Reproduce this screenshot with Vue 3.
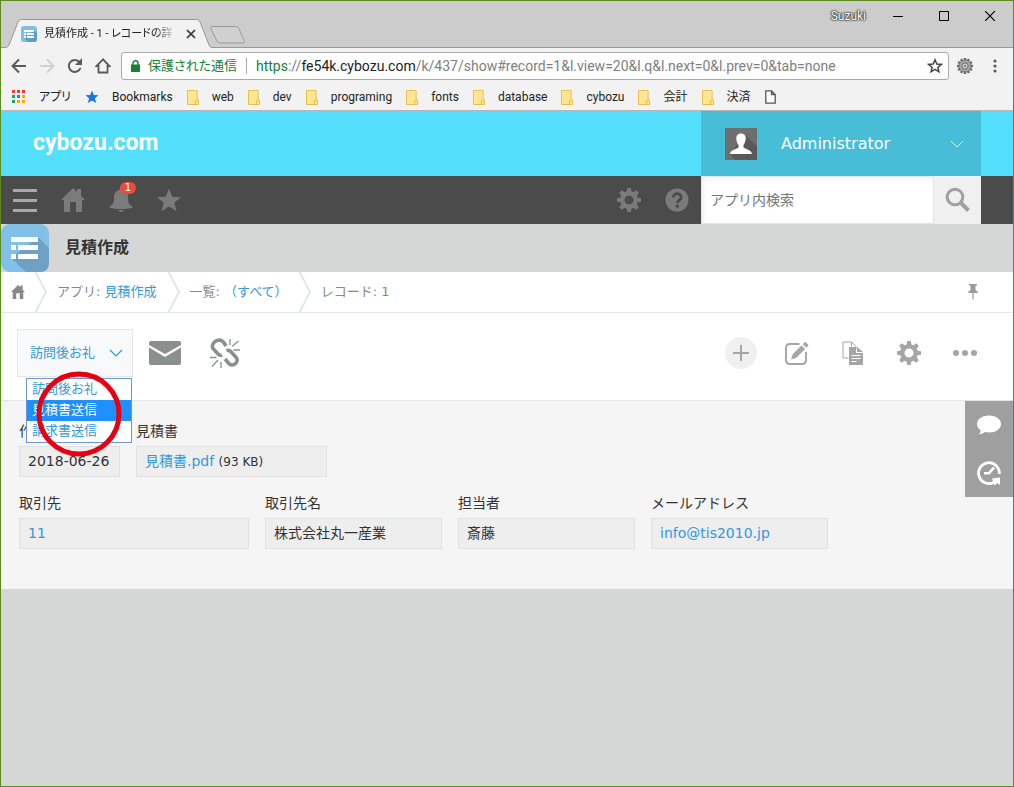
<script setup>
import { ref } from 'vue'

const bookmarks = [
  { label: 'アプリ', icon: 'apps' },
  { label: 'Bookmarks', icon: 'bluestar' },
  { label: 'web', icon: 'folder' },
  { label: 'dev', icon: 'folder' },
  { label: 'programing', icon: 'folder' },
  { label: 'fonts', icon: 'folder' },
  { label: 'database', icon: 'folder' },
  { label: 'cybozu', icon: 'folder' },
  { label: '会計', icon: 'folder' },
  { label: '決済', icon: 'folder' },
  { label: '', icon: 'page' },
]

const statuses = ['訪問後お礼', '見積書送信', '請求書送信']
const status = ref('訪問後お礼')
const highlighted = ref('見積書送信')
const keyword = ref('')
const teeth = [0, 45, 90, 135, 180, 225, 270, 315]
const fineTeeth = [0, 30, 60, 90, 120, 150, 180, 210, 240, 270, 300, 330]
const appColors = ['#f4382c', '#f4382c', '#f4382c', '#1fa463', '#2a7de1', '#f9a800', '#1fa463', '#f9a800', '#f9a800']
</script>

<template>
  <div class="window">
    <svg class="defs" aria-hidden="true">
      <symbol id="gear" viewBox="0 0 24 24">
        <circle cx="12" cy="12" r="6.7" fill="none" stroke="currentColor" stroke-width="4.4" />
        <path v-for="a in teeth" :key="a" d="M9.4 5 10.2 0h3.6l.8 5z" fill="currentColor" :transform="`rotate(${a} 12 12)`" />
      </symbol>
      <symbol id="house" viewBox="0 0 24 24">
        <path d="M12 0 0 12h3v12h6V14h6v10h6V12h3l-4-4V1h-4v3z" fill="currentColor" />
      </symbol>
      <symbol id="apps" viewBox="0 0 14 14">
        <rect v-for="(c, i) in appColors" :key="i" :x="(i % 3) * 5" :y="Math.floor(i / 3) * 5" width="3" height="3" :fill="c" />
      </symbol>
      <symbol id="bluestar" viewBox="0 0 14 14">
        <path d="M7 .5 8.8 5l4.7.3-3.6 3 1.2 4.7L7 10.4 2.9 13l1.2-4.7-3.6-3L5.200 5z" fill="#1a73e8" />
      </symbol>
      <symbol id="folder" viewBox="0 0 12 15">
        <path d="M.5.5h9.600v9.500h1.400v4.500H.5z" fill="#ffe694" stroke="#e6c04b" />
        <path d="M8.500 14v-3.500h1.700" fill="none" stroke="#e6c04b" />
      </symbol>
      <symbol id="page" viewBox="0 0 11 14">
        <path d="M.8.8h5.700l3.700 3.700v8.700H.8zM6.500.8v3.700h3.700" fill="#fff" stroke="#555" stroke-width="1.300" />
      </symbol>
    </svg>

    <header class="browser">
      <div class="tabstrip">
        <div class="tab">
          <svg class="tabshape" viewBox="0 0 206 29" preserveAspectRatio="none" aria-hidden="true">
            <path d="M0 28.500 Q2 28 3 26L12 3Q13 .5 15 .5H191Q193 .5 194 3L203 26Q204 28.500 206 28.500V29H0z" fill="#f2f2f2" />
            <path d="M0 28.500 Q2 28 3 26L12 3Q13 .5 15 .5H191Q193 .5 194 3L203 26Q204 28.500 206 28.500" fill="none" stroke="#999" />
          </svg>
          <svg class="favicon" viewBox="0 0 16 16" aria-hidden="true">
            <rect width="16" height="16" rx="3" fill="#7fbfe6" />
            <path d="M13 4 16 7v6q0 3-3 3H7l-4-4z" fill="#5b9fca" />
            <path d="M3 4h10v2H3zM3 7h2v2H3zM6 7h7v2H6zM3 10h2v2H3zM6 10h7v2H6z" fill="#fff" />
          </svg>
          <span class="tabtitle">見積作成 - 1 - レコードの詳</span>
          <button class="plain tabclose" aria-label="タブを閉じる">
            <svg width="10" height="10" viewBox="0 0 10 10"><path d="M1 1l8 8M9 1 1 9" stroke="#333" stroke-width="1.700" /></svg>
          </button>
        </div>
        <button class="plain newtab" aria-label="新しいタブ">
          <svg width="36" height="18" viewBox="0 0 36 18"><path d="M2 .5h24q2 0 3 2l5 12q1 2.500-1 2.500H10q-2 0-3-2L1 3Q0 .5 2 .5z" fill="#d0d0d0" stroke="#999" /></svg>
        </button>
        <span class="account">Suzuki</span>
        <button class="plain winbtn" aria-label="最小化"><svg width="10" height="10"><path d="M0 5.500h10" stroke="#000" /></svg></button>
        <button class="plain winbtn" aria-label="最大化"><svg width="10" height="10"><path d="M.5.5h9v9h-9z" fill="none" stroke="#000" /></svg></button>
        <button class="plain winbtn" aria-label="閉じる"><svg width="10" height="10"><path d="M0 0l10 10M10 0 0 10" stroke="#000" stroke-width="1.200" /></svg></button>
      </div>

      <div class="addressrow">
        <button class="plain navbtn" aria-label="戻る"><svg width="16" height="16" viewBox="0 0 16 16"><path d="M15 8H2M8 1.500 1.500 8 8 14.500" fill="none" stroke="#5a5a5a" stroke-width="2" /></svg></button>
        <button class="plain navbtn" aria-label="進む"><svg width="16" height="16" viewBox="0 0 16 16"><path d="M1 8h13M8 1.500 14.500 8 8 14.500" fill="none" stroke="#d0d0d0" stroke-width="2" /></svg></button>
        <button class="plain navbtn" aria-label="再読み込み"><svg width="16" height="16" viewBox="0 0 16 16"><path d="M13.500 10A6 6 0 1 1 12.600 4.200" fill="none" stroke="#5a5a5a" stroke-width="2" /><path d="M15 0v7H8z" fill="#5a5a5a" /></svg></button>
        <button class="plain navbtn" aria-label="ホーム"><svg width="16" height="16" viewBox="0 0 16 16"><path d="M8 1.400 1.500 8H3.500v6.500H12.500V8H14.500z" fill="none" stroke="#5a5a5a" stroke-width="1.800" /></svg></button>
        <div class="omnibox">
          <svg width="9" height="12" viewBox="0 0 9 12" aria-hidden="true"><path d="M0 4.500h9V12H0z" fill="#188038" /><path d="M2 5V3a2.500 2.200 0 0 1 5 0v2" fill="none" stroke="#188038" stroke-width="1.400" /></svg>
          <span class="secure">保護された通信</span>
          <span class="divider"></span>
          <span class="url"><span class="scheme">https</span>://<b>fe54k.cybozu.com</b>/k/437/show#record=1&amp;l.view=20&amp;l.q&amp;l.next=0&amp;l.prev=0&amp;tab=none</span>
          <button class="plain" aria-label="ブックマークに追加"><svg width="16" height="16" viewBox="0 0 16 16"><path d="M8 1.800 9.800 6l4.500.4-3.400 3 1 4.400L8 11.400l-3.900 2.400 1-4.400-3.400-3L6.200 6z" fill="none" stroke="#444" stroke-width="1.500" /></svg></button>
        </div>
        <button class="plain ext" aria-label="拡張機能">
          <svg width="16" height="16" viewBox="0 0 16 16">
            <rect v-for="a in fineTeeth" :key="a" x="6.800" y="0" width="2.400" height="3" fill="#666" :transform="`rotate(${a} 8 8)`" />
            <circle cx="8" cy="8" r="6" fill="#a8a8a8" stroke="#777" />
            <circle cx="8" cy="8" r="3.200" fill="#d0d0d0" stroke="#666" />
            <circle cx="8" cy="8" r="1.300" fill="#888" />
          </svg>
        </button>
        <button class="plain kebab" aria-label="メニュー"><svg width="4" height="14" viewBox="0 0 4 14"><g fill="#5a5a5a"><circle cx="2" cy="2" r="1.600" /><circle cx="2" cy="7" r="1.600" /><circle cx="2" cy="12" r="1.600" /></g></svg></button>
      </div>

      <nav class="bookmarks" aria-label="ブックマーク">
        <a v-for="b in bookmarks" :key="b.icon + b.label" href="#" :class="b.icon">
          <svg aria-hidden="true"><use :href="'#' + b.icon" /></svg><span v-if="b.label">{{ b.label }}</span>
        </a>
      </nav>
    </header>

    <div class="brandbar">
      <a href="#" class="logo">cybozu.com</a>
      <button class="plain user">
        <svg width="32" height="32" viewBox="0 0 32 32" aria-hidden="true">
          <rect width="32" height="32" fill="#6e6e6e" />
          <path d="M20 7 32 18v14H10l-5-6z" fill="#595959" />
          <path d="M16 5.500c3.300 0 5 2.300 4.700 5.500-.2 2.800-1.300 4.800-2.200 5.900v2.600c1.500 1.600 8 2 8.500 6.500H5c.5-4.500 7-4.900 8.500-6.500v-2.600c-.9-1.100-2-3.100-2.200-5.900C11 7.800 12.700 5.500 16 5.500z" fill="#fff" />
        </svg>
        <span>Administrator</span>
        <svg width="14" height="8" viewBox="0 0 14 8" aria-hidden="true"><path d="M1 1l6 6 6-6" fill="none" stroke="#d9f5fb" /></svg>
      </button>
    </div>

    <div class="globalnav">
      <button class="plain menu" aria-label="メニュー"><svg width="24" height="24" viewBox="0 0 24 24"><path d="M0 2.500h24M0 12.500h24M0 22.500h24" stroke="#a8a8a8" stroke-width="3" /></svg></button>
      <button class="plain" aria-label="ポータル"><svg width="24" height="24"><use href="#house" /></svg></button>
      <button class="plain bell" aria-label="通知">
        <svg width="24" height="24" viewBox="0 0 24 24"><path d="M10.500 2q0-2 1.500-2t1.500 2c4 .8 5.500 3.500 5.500 7 0 5 .5 7.500 4.500 9.500v1.200c-7 1.700-16 1.700-23 0v-1.200C4.500 16.500 5 14 5 9c0-3.500 1.500-6.200 5.500-7zM9.300 22h5.400q-.7 2-2.700 2t-2.700-2z" fill="currentColor" /></svg>
        <span class="badge">1</span>
      </button>
      <button class="plain" aria-label="お気に入り"><svg width="24" height="24" viewBox="0 0 24 24"><path d="M12 .5l3.300 8.200 8.700.5-6.700 5.600 2.200 8.500L12 18.600l-7.500 4.700 2.200-8.500L0 9.200l8.700-.5z" fill="currentColor" /></svg></button>
      <span class="spacer"></span>
      <button class="plain" aria-label="設定"><svg width="24" height="24"><use href="#gear" /></svg></button>
      <button class="plain" aria-label="ヘルプ"><svg width="24" height="24" viewBox="0 0 24 24"><circle cx="12" cy="12" r="11.500" fill="currentColor" /><path d="M8.200 9.600c0-5.200 8-5 8-.4 0 2.800-3.800 3-3.800 6" fill="none" stroke="#4b4b4b" stroke-width="2.800" /><circle cx="12.300" cy="18.300" r="1.700" fill="#4b4b4b" /></svg></button>
      <form class="search" @submit.prevent>
        <input v-model="keyword" type="text" placeholder="アプリ内検索" aria-label="アプリ内検索" />
        <button class="plain" aria-label="検索"><svg width="26" height="26" viewBox="0 0 26 26"><circle cx="10" cy="10" r="7.800" fill="none" stroke="#a0a0a0" stroke-width="3" /><path d="M15.500 15.500 23.500 23.500" stroke="#a0a0a0" stroke-width="4" /></svg></button>
      </form>
    </div>

    <div class="apptitle">
      <svg width="48" height="48" viewBox="0 0 48 48" aria-hidden="true">
        <rect width="48" height="48" rx="9" fill="#82c0e8" />
        <path d="M37 13 48 24v15q0 9-9 9H25L10 34z" fill="#6ea1c4" />
        <path d="M10 13h27v5H10zM10 21h5v5h-5zM17 21h20v5H17zM10 30h5v5h-5zM17 30h20v5H17z" fill="#fff" />
      </svg>
      <h1>見積作成</h1>
    </div>

    <nav class="crumbs" aria-label="パンくず">
      <a href="#" class="home" aria-label="ホーム"><svg width="14" height="14"><use href="#house" /></svg></a>
      <svg class="sep" viewBox="0 0 12 40" aria-hidden="true"><path d="M.5 0l10.500 20L.5 40" /></svg>
      <span class="crumb">アプリ: <a href="#">見積作成</a></span>
      <svg class="sep" viewBox="0 0 12 40" aria-hidden="true"><path d="M.5 0l10.500 20L.5 40" /></svg>
      <span class="crumb">一覧: <a href="#">（すべて）</a></span>
      <svg class="sep" viewBox="0 0 12 40" aria-hidden="true"><path d="M.5 0l10.500 20L.5 40" /></svg>
      <span class="crumb">レコード: 1</span>
      <button class="plain pin" aria-label="固定"><svg width="10" height="16" viewBox="0 0 10 16"><path d="M1 0h8v1.500H7.500V6q2 .8 2.500 3H5.600v6.500H4.400V9H0q.5-2.200 2.500-3V1.500H1z" fill="#9a9a9a" /></svg></button>
    </nav>

    <div class="toolbar">
      <div class="status">
        <select v-model="status" aria-label="ステータス">
          <option v-for="s in statuses" :key="s">{{ s }}</option>
        </select>
        <svg class="caret" width="14" height="8" viewBox="0 0 14 8" aria-hidden="true"><path d="M1 1l6 6 6-6" fill="none" stroke="#3498db" stroke-width="1.200" /></svg>
        <ul class="options" role="listbox" aria-label="ステータス">
          <li v-for="s in statuses" :key="s" role="option" :aria-selected="s === highlighted" :class="{ on: s === highlighted }" @mouseenter="highlighted = s" @click="status = s">{{ s }}</li>
        </ul>
        <svg class="ring" width="86" height="86" viewBox="0 0 86 86" aria-hidden="true"><circle cx="43" cy="43" r="40" fill="none" stroke="#e60012" stroke-width="5" /></svg>
      </div>
      <button class="plain tool left" aria-label="メール">
        <svg width="32" height="24" viewBox="0 0 32 24"><path d="M2 0h28q2 0 2 2v2L16 13 0 4V2q0-2 2-2zM0 6.500 16 16 32 6.500V22q0 2-2 2H2q-2 0-2-2z" fill="#8b8f8e" /></svg>
      </button>
      <button class="plain tool left" aria-label="リンク解除">
        <svg width="30" height="30" viewBox="0 0 30 30" fill="none" stroke="#8b8f8e"><path d="M16 8 13.500 4Q9.500.5 5 3.500 1 7 3 10.500L8.500 16.500Q10 17.800 12 16.800M16.500 12.600q2.500-.8 4 .7l5.500 6q2.500 3-.2 6-3 3-6.500.7L15 21" stroke-width="3.600" /><path d="M20 1v6M28.500 3l-6.500 5.500M23.500 12H30M0 19.500H6.500M8 22 2 28.500M11 24v6" stroke-width="1.300" /></svg>
      </button>
      <span class="spacer"></span>
      <button class="plain tool add" aria-label="追加"><svg width="16" height="16"><path d="M0 8h16M8 0v16" stroke="#a5a5a5" stroke-width="2" /></svg></button>
      <button class="plain tool" aria-label="編集">
        <svg width="24" height="24" viewBox="0 0 24 24"><path d="M14.500 3H5Q1 3 1 7v12q0 4 4 4h12q4 0 4-4V11" fill="none" stroke="currentColor" stroke-width="1.900" /><path d="M6 18.500l1.700-5.300L16.500 4.400l3.600 3.600-8.800 8.800zM17.700 3.200l1.900-1.900q.6-.6 1.200 0l2.400 2.400q.6.6 0 1.200l-1.900 1.900z" fill="currentColor" /></svg>
      </button>
      <button class="plain tool" aria-label="複製">
        <svg width="22" height="24" viewBox="0 0 22 24"><path d="M6.500 17H1V1h8.500L14 5.500V8M9.500 1v4.500" fill="none" stroke="currentColor" /><path d="M7 6h7v6h7v12H7zM15 6l6 5h-6z" fill="currentColor" /><path d="M9.500 14.500h9M9.500 17.500h9M9.500 20.500h5" stroke="#fff" /></svg>
      </button>
      <button class="plain tool" aria-label="設定"><svg width="24" height="24"><use href="#gear" /></svg></button>
      <button class="plain tool" aria-label="その他"><svg width="24" height="6" viewBox="0 0 24 6"><g fill="currentColor"><circle cx="3" cy="3" r="3" /><circle cx="12" cy="3" r="3" /><circle cx="21" cy="3" r="3" /></g></svg></button>
    </div>

    <main class="record">
      <dl class="row">
        <div class="field date"><dt>作成日</dt><dd>2018-06-26</dd></div>
        <div class="field file"><dt>見積書</dt><dd><a href="#">見積書.pdf</a> <small>(93 KB)</small></dd></div>
      </dl>
      <dl class="row">
        <div class="field lookup"><dt>取引先</dt><dd><a href="#">11</a></dd></div>
        <div class="field"><dt>取引先名</dt><dd>株式会社丸一産業</dd></div>
        <div class="field"><dt>担当者</dt><dd>斎藤</dd></div>
        <div class="field"><dt>メールアドレス</dt><dd><a href="mailto:info@tis2010.jp">info@tis2010.jp</a></dd></div>
      </dl>
      <aside class="side">
        <button class="plain" aria-label="コメント"><svg width="24" height="20" viewBox="0 0 24 20"><path d="M12 .5C18.600.5 24 4 24 9s-5.400 8.500-12 8.500q-2 0-4-.4Q6 19 2 19.500 3.800 17.500 3.700 15.300 0 12.700 0 9C0 4 5.400.5 12 .5z" fill="#fff" /></svg></button>
        <button class="plain" aria-label="変更履歴"><svg width="24" height="26" viewBox="0 0 24 26"><path d="M22.300 14A10.400 10.400 0 1 0 17 22.200" fill="none" stroke="#fff" stroke-width="2.800" /><path d="M15 18.500 23 17.500v7.500l-2.500-2-3 2.500z" fill="#fff" /><path d="M7 13.200h5l5-5.500" fill="none" stroke="#fff" stroke-width="2.600" /></svg></button>
      </aside>
    </main>
  </div>
</template>

<style>
body { margin: 0; }
</style>

<style scoped>
.window {
  box-sizing: border-box;
  min-height: 100vh;
  border: 1px solid #5b8c1e;
  background: #d4d7d6;
  color: #333;
  font: 14px/20px "DejaVu Sans", "Noto Sans CJK JP", sans-serif;
}
.defs { position: absolute; width: 0; height: 0; }
svg { flex: none; display: block; }
a { color: #3498db; text-decoration: none; }
.plain {
  display: flex;
  align-items: center;
  justify-content: center;
  flex: none;
  padding: 0;
  border: 0;
  background: none;
  color: inherit;
  font: inherit;
}
.spacer { flex: 1; }

/* Browser chrome */
.browser {
  border-bottom: 1px solid #b6b6b6;
  background: #f2f2f2;
  color: #222;
  font: 12px/16px Roboto, "Noto Sans CJK JP", sans-serif;
  font-feature-settings: "palt";
}
.tabstrip {
  display: flex;
  height: 46px;
  border-bottom: 1px solid #999;
  background: #ccc;
}
.tab {
  position: relative;
  display: flex;
  align-items: center;
  box-sizing: border-box;
  width: 206px;
  height: 29px;
  margin: 18px 0 0 5px;
  padding: 0 16px 0 15px;
}
.tabshape { position: absolute; inset: 0; width: 100%; height: 100%; }
.favicon { position: relative; width: 16px; height: 16px; }
.tabtitle {
  position: relative;
  flex: 1;
  margin: 0 10px 0 7px;
  overflow: hidden;
  font-size: 11px;
  white-space: nowrap;
  mask-image: linear-gradient(90deg, #000 85%, transparent);
}
.tabclose { position: relative; }
.newtab { height: 18px; margin-top: 25px; margin-left: -2px; }
.account {
  margin: 7px 9px 0 auto;
  color: #fff;
  text-shadow: 0 0 1px #333, 0 0 1px #333, 0 0 2px #333, 0 0 2px #333;
}
.winbtn { width: 46px; height: 29px; }
.addressrow { display: flex; align-items: center; height: 36px; padding-left: 4px; }
.navbtn { width: 28px; height: 28px; }
.omnibox {
  display: flex;
  align-items: center;
  flex: 1;
  min-width: 0;
  box-sizing: border-box;
  height: 28px;
  margin-left: 4px;
  padding: 0 5px 0 9px;
  border: 1px solid #aaa;
  border-radius: 3px;
  background: #fff;
  font-size: 13px;
}
.secure { margin-left: 8px; color: #188038; white-space: nowrap; }
.divider { width: 1px; height: 16px; margin: 0 9px; background: #aaa; }
.url { flex: 1; min-width: 0; overflow: hidden; color: #808080; font-size: 14px; white-space: nowrap; }
.url b { color: #222; font-weight: 400; }
.scheme { color: #188038; }
.ext { margin-left: 8px; }
.kebab { margin: 0 16px 0 20px; }
.bookmarks { display: flex; align-items: center; gap: 14px; height: 26px; padding-left: 11px; }
.bookmarks a { display: flex; align-items: center; gap: 13px; color: #222; white-space: nowrap; }
.bookmarks svg { width: 12px; height: 15px; }
.bookmarks .apps svg, .bookmarks .bluestar svg { width: 14px; height: 14px; }
.bookmarks .page svg { width: 11px; height: 14px; }

/* Brand bar */
.brandbar { display: flex; justify-content: space-between; height: 65px; padding-right: 32px; background: #54e0fd; }
.logo {
  padding: 16px 32px;
  color: #fff;
  font: 700 23px/32px Roboto, sans-serif;
}
.user {
  box-sizing: border-box;
  width: 280px;
  padding: 0 17px 0 24px;
  background: #48bdd8;
  color: #fff;
  font-size: 16px;
}
.user span { flex: 1; margin-left: 24px; text-align: left; }

/* Global navigation */
.globalnav {
  display: flex;
  align-items: center;
  gap: 24px;
  height: 48px;
  padding: 0 32px 0 12px;
  background: #4b4b4b;
  color: #7b7b7b;
}
.bell { position: relative; }
.badge {
  position: absolute;
  top: -6px;
  right: -3px;
  width: 16px;
  border-radius: 6px;
  background: #e74c3c;
  color: #fff;
  font-size: 10px;
  line-height: 12px;
}
.search { display: flex; box-sizing: border-box; width: 280px; height: 48px; margin-left: -12px; background: #fff; }
.search input {
  flex: 1;
  min-width: 0;
  padding: 0 8px;
  border: 1px solid #e3e7e8;
  background: #fff;
  box-shadow: inset 2px 2px 4px #f0f0f0;
  color: #333;
  font: inherit;
}
.search input::placeholder { color: #757575; opacity: 1; }
.search button { width: 47px; background: #f0f0f0; }

/* App heading and breadcrumbs */
.apptitle { display: flex; align-items: center; gap: 16px; height: 48px; }
.apptitle h1 { margin: 0; font-size: 16px; font-weight: 700; line-height: 24px; }
.crumbs {
  display: flex;
  align-items: center;
  height: 40px;
  border-bottom: 1px solid #e3e7e8;
  background: #fff;
  color: #888;
  font-size: 13px;
  white-space: nowrap;
}
.home { margin: 0 10px; color: #888; }
.sep { width: 12px; height: 40px; fill: none; stroke: #e3e7e8; stroke-width: 2; }
.crumb { margin: 0 11px 0 10px; }
.pin { margin: 0 35px 0 auto; }

/* Record toolbar */
.toolbar {
  display: flex;
  align-items: center;
  gap: 24px;
  padding: 16px 32px 23px 16px;
  border-bottom: 1px solid #e3e7e8;
  background: #fff;
  color: #a5a5a5;
}
.status { position: relative; width: 116px; margin-right: -8px; }
.status select {
  display: block;
  appearance: none;
  width: 100%;
  height: 48px;
  padding: 0 12px;
  border: 1px solid #e3e7e8;
  border-radius: 0;
  background: #f7f9fa;
  color: #3498db;
  font: inherit;
  font-size: 13px;
}
.caret { position: absolute; top: 20px; right: 10px; pointer-events: none; }
.options {
  position: absolute;
  z-index: 1;
  top: 49px;
  left: 9px;
  box-sizing: border-box;
  width: 106px;
  margin: 0;
  padding: 0;
  border: 1px solid #6f96cf;
  background: #fff;
  color: #3498db;
  font-size: 13px;
  line-height: 19px;
  list-style: none;
}
.options li { padding: 0 0 2px 5px; }
.options .on { background: #1e90ff; color: #fff; }
.ring { position: absolute; z-index: 2; top: 42px; left: 19px; pointer-events: none; }
.tool { width: 32px; height: 32px; }
.left { margin-right: 4px; }
.add { border-radius: 50%; background: #f0f0f0; }

/* Record */
.record { position: relative; padding: 20px 18px 40px; background: #f5f5f5; }
.row { display: flex; gap: 16px; margin: 0; }
.row + .row { margin-top: 16px; }
.field { width: 177px; }
.field dt { margin-bottom: 5px; }
.field dd {
  box-sizing: border-box;
  height: 31px;
  margin: 0;
  padding: 4px 8px;
  border: 1px solid #e0e2e2;
  background: #eee;
  white-space: nowrap;
}
.date { width: 101px; }
.file { width: 191px; }
.lookup { width: 230px; }
.field small { font-size: 12px; }
.side { position: absolute; top: 0; right: 0; background: #9f9f9f; }
.side button { width: 48px; height: 48px; }
</style>
